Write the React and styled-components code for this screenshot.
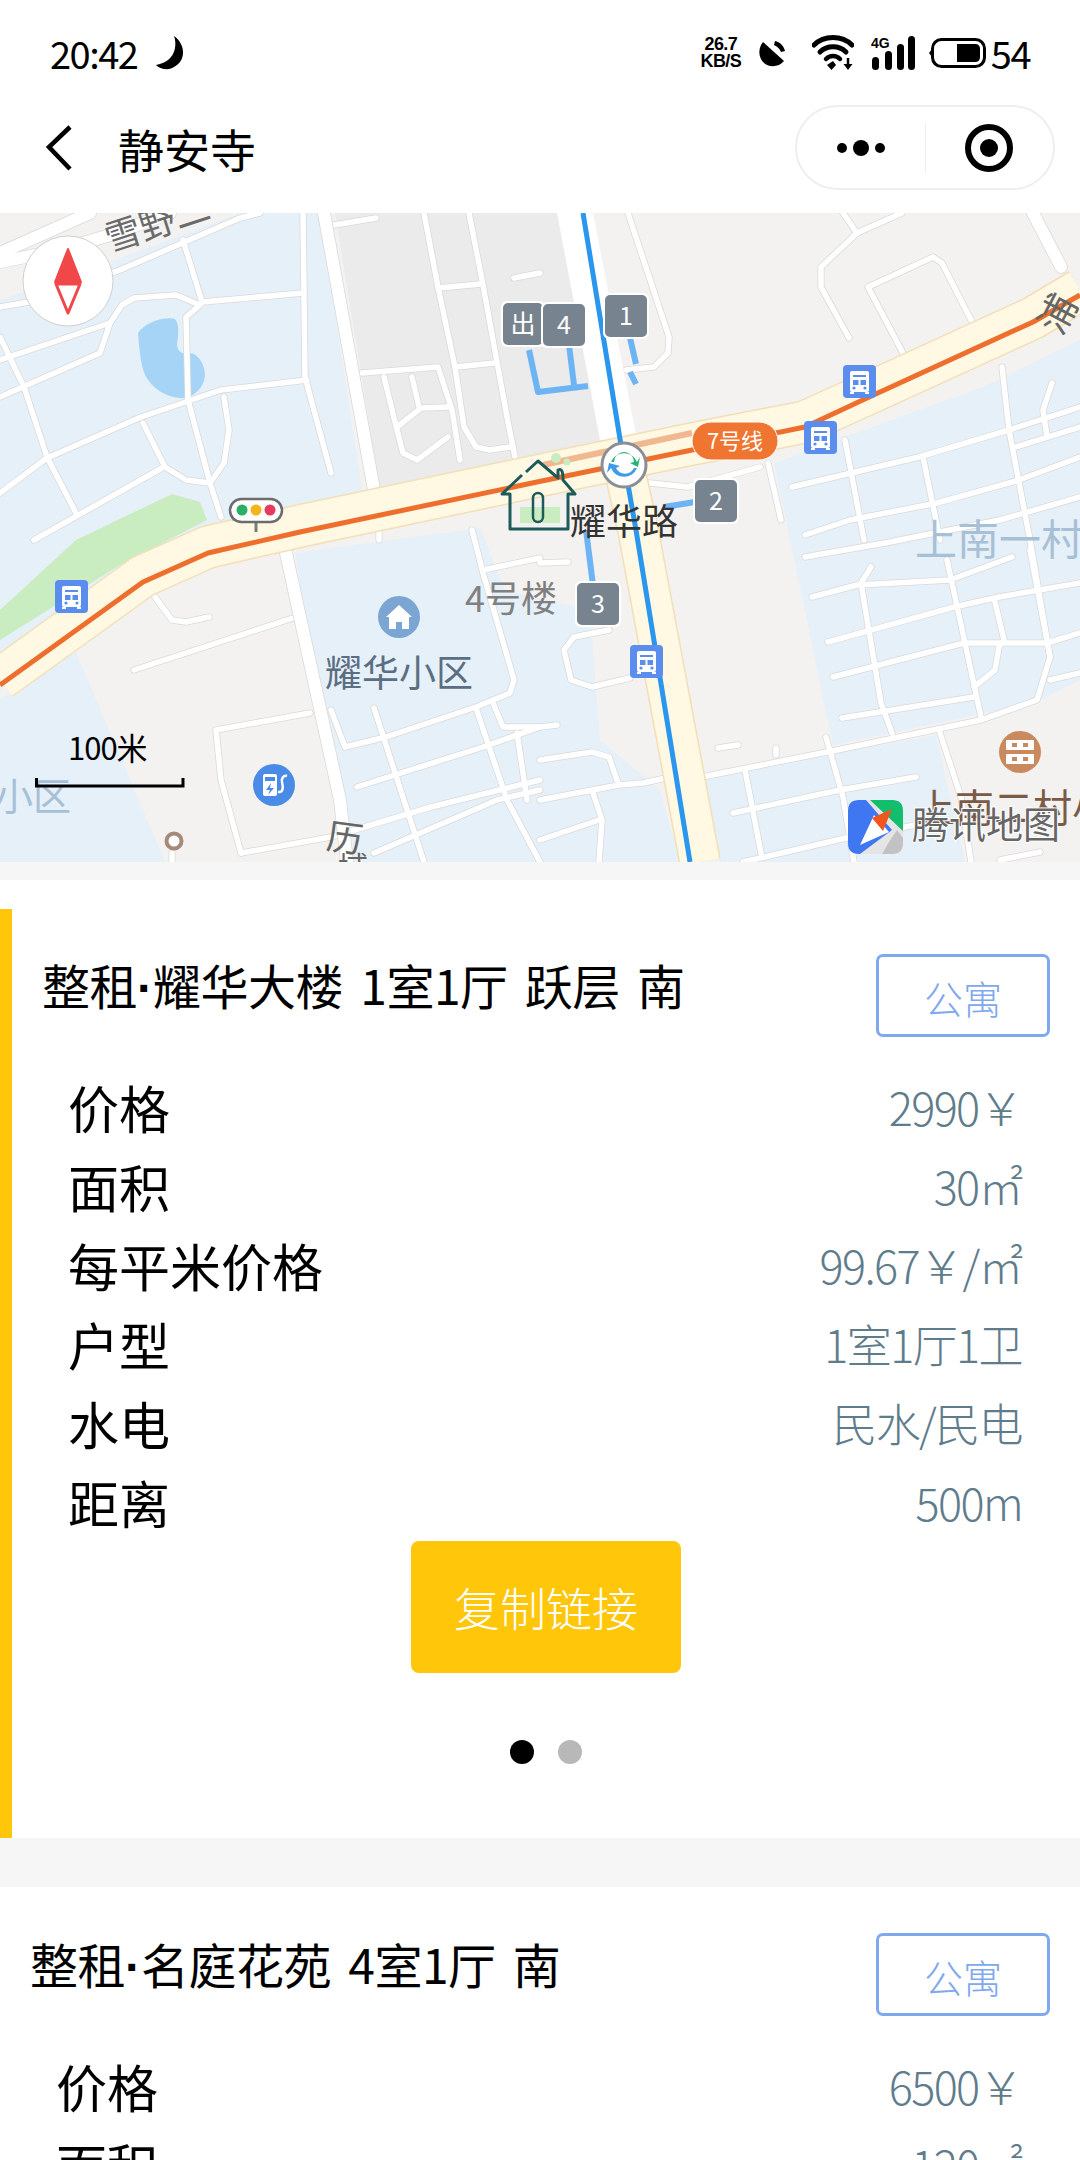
import React from "react";
import styled, { createGlobalStyle } from "styled-components";

const FONT = `"Noto Sans CJK SC", "Noto Sans", sans-serif`;

const Global = createGlobalStyle`
  html, body { margin: 0; padding: 0; background: #f6f6f6; }
  * { box-sizing: border-box; }
`;

const Page = styled.div`
  width: 1080px;
  height: 2160px;
  overflow: hidden;
  background: #f6f6f6;
  font-family: ${FONT};
  color: #000;
`;

const TopBars = styled.header`
  background: #fff;
  height: 213px;
  display: flex;
  flex-direction: column;
`;

const StatusBar = styled.div`
  height: 95px;
  padding: 33px 50px 0 50px;
  display: flex;
  align-items: flex-start;
  justify-content: space-between;
`;

const StatusGroup = styled.div`
  display: flex;
  align-items: center;
  height: 40px;
`;

const StatusText = styled.span`
  font-size: 38px;
  line-height: 40px;
  letter-spacing: -1.5px;
  font-weight: 400;
`;

const Speed = styled.div`
  width: 44px;
  margin-right: 15px;
  margin-left: -6px;
  text-align: center;
  font-family: "Liberation Sans", sans-serif;
  font-weight: 700;
  font-size: 18px;
  line-height: 17px;
  letter-spacing: -0.6px;
  white-space: nowrap;
`;

const NavBar = styled.nav`
  height: 118px;
  padding: 10px 25px 23px 45px;
  display: flex;
  align-items: center;
`;

const NavTitle = styled.h1`
  margin: 0 0 0 45px;
  font-size: 46px;
  line-height: 66px;
  height: 66px;
  font-weight: 400;
  flex: 1;
`;

const Capsule = styled.div`
  width: 260px;
  height: 85px;
  border: 2px solid #eeeeee;
  border-radius: 43px;
  display: flex;
  align-items: center;
  background: #fff;
`;

const CapsuleCell = styled.div`
  flex: 1;
  height: 50px;
  display: flex;
  align-items: center;
  justify-content: center;
  border-left: ${(p) => (p.$divided ? "1px solid #ececec" : "none")};
`;

const MapBox = styled.section`
  height: 649px;
  overflow: hidden;
  background: #f3f2f0;
`;

const MapSvg = styled.svg`
  display: block;
  width: 1080px;
  height: 649px;
  font-family: ${FONT};
`;

const Listing = styled.section`
  background: #fff;
  margin-top: ${(p) => p.$gap}px;
  padding-top: ${(p) => p.$top}px;
`;

const ListingInner = styled.div`
  border-left: ${(p) => (p.$accent ? "12px solid #ffc60a" : "none")};
  padding: ${(p) => (p.$accent ? 45 : 46)}px 30px 0 30px;
  height: ${(p) => (p.$accent ? "929px" : "auto")};
`;

const ListingHead = styled.div`
  display: flex;
  justify-content: space-between;
  align-items: flex-start;
  margin-bottom: 30px;
`;

const ListingTitle = styled.h2`
  margin: 0;
  font-size: 48px;
  line-height: 60px;
  font-weight: 400;
  letter-spacing: -0.5px;
  word-spacing: 7px;
  white-space: pre;
`;

const TitleDot = styled.span`
  font-family: "Liberation Sans", sans-serif;
  font-weight: 700;
  letter-spacing: 0;
`;

const Tag = styled.div`
  width: 174px;
  height: 83px;
  border: 3px solid #80a8ee;
  border-radius: 7px;
  color: #80a8ee;
  font-size: 39px;
  padding-top: 2px;
  display: flex;
  align-items: center;
  justify-content: center;
  font-weight: 300;
`;

const Rows = styled.div`
  padding: 0 0 0 26px;
`;

const Row = styled.div`
  height: 79px;
  padding-right: 28px;
  display: flex;
  align-items: center;
  justify-content: space-between;
`;

const RowLabel = styled.span`
  font-size: 51px;
  font-weight: 400;
`;

const RowValue = styled.span`
  font-size: 45px;
  font-weight: 300;
  color: #5f7c8c;
  letter-spacing: -1.6px;
`;

const CopyButton = styled.button`
  display: block;
  width: 270px;
  height: 132px;
  margin: 0 auto;
  padding: 0 0 3px;
  border: none;
  border-radius: 8px;
  background: #ffc60a;
  color: #fff;
  font-family: ${FONT};
  font-size: 46px;
  font-weight: 300;
`;

const Dots = styled.div`
  margin-top: 67px;
  display: flex;
  justify-content: center;
  gap: 24px;
`;

const Dot = styled.span`
  width: 24px;
  height: 24px;
  border-radius: 50%;
  background: ${(p) => (p.$on ? "#000" : "#b8b8b8")};
`;

/* ---------- status and nav icons ---------- */
const Moon = () => (
  <svg width="36" height="34" viewBox="0 0 36 34" style={{ marginLeft: 15 }}>
    <path d="M22 0c5 6 5 18-2 25-5 5-10 6-16 4 5 5 14 6 21 0 9-7 8-21-3-29z" fill="#000" />
    <path d="M22 0c3 8 1 19-6 24-4 3-8 4-12 5 6 5 15 5 21-1 8-8 6-21-3-28z" fill="#000" />
  </svg>
);

const SatIcon = () => (
  <svg width="30" height="27" viewBox="0 0 30 27" style={{ marginRight: 24 }}>
    <path d="M5 2 C0 8 0 18 6 23 C12 28 21 27 26 21 Z" fill="#000" />
    <path d="M17 1 C22 2 26 6 27 11 L23 12 C22 9 20 7 16 5 Z" fill="#000" />
  </svg>
);

const Wifi = () => (
  <svg width="42" height="36" viewBox="0 0 42 36" style={{ marginRight: 17 }}>
    <path d="M2 10 C12 0 30 0 40 10" fill="none" stroke="#000" strokeWidth="5" strokeLinecap="round" />
    <path d="M8 17 C15 10 27 10 34 17" fill="none" stroke="#000" strokeWidth="5" strokeLinecap="round" />
    <path d="M14 24 C18 20 24 20 28 24" fill="none" stroke="#000" strokeWidth="4.5" strokeLinecap="round" />
    <path d="M15 30 L21 26 L24 30 L19.500 35 Z" fill="#000" />
    <path d="M36 23 V32" stroke="#000" strokeWidth="2.500" />
    <path d="M31.500 29 H40.500 L36 35 Z" fill="#000" />
  </svg>
);

const Signal = () => (
  <svg width="46" height="34" viewBox="0 0 46 34" style={{ marginRight: 11 }} fontFamily="Liberation Sans" >
    <text x="0" y="12" fontSize="14" fontWeight="700">4G</text>
    <rect x="1" y="21" width="7" height="13" rx="3.500" fill="#000" />
    <rect x="14" y="15" width="7" height="19" rx="3.500" fill="#000" />
    <rect x="26" y="8" width="7" height="26" rx="3.500" fill="#000" />
    <rect x="37" y="0" width="7" height="34" rx="3.500" fill="#000" />
  </svg>
);

const Battery = () => (
  <svg width="58" height="30" viewBox="0 0 58 30" style={{ marginRight: 5 }}>
    <path d="M1 15 L4 11 V19 Z" fill="#000" />
    <rect x="4.500" y="1.500" width="52" height="27" rx="9" fill="none" stroke="#000" strokeWidth="3" />
    <path d="M29 6 H47 Q52 6 52 11 V19 Q52 24 47 24 H29 Z" fill="#000" />
  </svg>
);

const Back = () => (
  <svg width="28" height="46" viewBox="0 0 28 46">
    <path d="M25 2 L4 22 L25 44" fill="none" stroke="#000" strokeWidth="4.500" />
  </svg>
);

const More = () => (
  <svg width="52" height="20" viewBox="0 0 52 20">
    <circle cx="7" cy="10" r="5" fill="#000" />
    <circle cx="26" cy="10" r="8" fill="#000" />
    <circle cx="45" cy="10" r="5" fill="#000" />
  </svg>
);

const Target = () => (
  <svg width="50" height="50" viewBox="0 0 50 50">
    <circle cx="25" cy="25" r="21" fill="none" stroke="#000" strokeWidth="6" />
    <circle cx="25" cy="25" r="9" fill="#000" />
  </svg>
);

/* ---------- map data ---------- */
const thin = [
  [[183, 240], [202, 302]],
  [[202, 302], [303, 293]],
  [[303, 213], [305, 377], [331, 473]],
  [[0, 360], [110, 323], [122, 305], [134, 298], [176, 295], [200, 305], [186, 317], [188, 400], [210, 483], [221, 517]],
  [[110, 323], [100, 353], [0, 397]],
  [[0, 337], [24, 387], [47, 457], [76, 513]],
  [[0, 493], [47, 458], [141, 417], [221, 390], [307, 380]],
  [[143, 423], [165, 467], [186, 480], [210, 483], [224, 463], [229, 430], [224, 397]],
  [[162, 468], [34, 540]],
  [[362, 373], [438, 367], [452, 410], [460, 460]],
  [[384, 377], [397, 430], [403, 453], [417, 460], [448, 437]],
  [[412, 377], [419, 407]],
  [[397, 427], [421, 408], [448, 407]],
  [[424, 213], [438, 287], [455, 367], [464, 427], [476, 447], [490, 450], [510, 447]],
  [[469, 213], [483, 285], [507, 417], [515, 457]],
  [[438, 288], [481, 284]],
  [[455, 367], [495, 363]],
  [[334, 225], [376, 218]],
  [[514, 278], [540, 273]],
  [[628, 213], [669, 337], [668, 353], [654, 367], [626, 370]],
  [[843, 213], [857, 233]],
  [[902, 213], [857, 233], [821, 267], [821, 287], [849, 338]],
  [[905, 357], [868, 287], [933, 257], [942, 263], [971, 320]],
  [[1002, 367], [1009, 430], [1030, 540], [1050, 657], [1037, 700], [981, 720], [837, 750], [702, 777]],
  [[1047, 437], [1043, 410], [1052, 383]],
  [[845, 440], [864, 540]],
  [[792, 487], [919, 457], [1009, 430], [1080, 407]],
  [[1016, 447], [1080, 427]],
  [[923, 457], [940, 540]],
  [[768, 463], [781, 520]],
  [[805, 535], [850, 520], [937, 503], [1019, 480], [1080, 457]],
  [[650, 483], [688, 487], [760, 467]],
  [[805, 557], [885, 543], [1000, 520], [1080, 497]],
  [[812, 597], [857, 585], [950, 580], [1012, 557]],
  [[871, 567], [861, 583], [881, 703], [892, 733]],
  [[828, 642], [954, 607], [999, 597], [1080, 583]],
  [[833, 677], [964, 643], [1047, 643], [1080, 633]],
  [[842, 718], [974, 697]],
  [[947, 560], [981, 717]],
  [[995, 602], [1004, 640], [999, 647], [995, 670], [974, 687]],
  [[1030, 550], [1050, 657]],
  [[1050, 680], [1080, 673]],
  [[826, 737], [843, 797], [854, 862]],
  [[745, 770], [761, 853]],
  [[733, 813], [840, 790], [916, 777]],
  [[743, 862], [850, 837], [916, 825]],
  [[940, 733], [961, 797], [971, 862]],
  [[718, 748], [738, 745]],
  [[776, 755], [776, 748]],
  [[540, 563], [568, 562]],
  [[540, 727], [557, 725]],
  [[609, 630], [574, 637], [564, 650], [571, 680], [592, 687], [630, 678]],
  [[540, 760], [592, 752], [609, 757], [618, 783]],
  [[540, 800], [619, 785], [643, 783], [666, 778]],
  [[593, 793], [602, 820], [599, 862]],
  [[540, 840], [599, 820]],
  [[155, 597], [172, 620], [186, 622], [209, 617]],
  [[134, 670], [293, 618]],
  [[310, 713], [216, 730], [221, 780], [241, 853]],
  [[241, 853], [331, 837], [431, 807], [540, 780]],
  [[331, 710], [345, 747], [386, 737], [476, 707], [510, 693], [514, 680], [483, 573], [472, 530]],
  [[374, 708], [424, 862]],
  [[357, 787], [483, 747], [540, 727]],
  [[476, 708], [507, 800], [540, 862]],
  [[493, 703], [503, 727], [540, 727]],
  [[517, 733], [527, 800]],
  [[374, 853], [497, 800], [540, 790]],
  [[483, 570], [540, 558]],
  [[379, 533], [379, 540]],
  [[172, 853], [172, 862]],
  [[1000, 860], [1040, 852]],
  [[0, 307], [40, 300], [120, 270], [240, 218], [260, 213]],
];

const thick = [
  [[0, 262], [60, 250], [110, 235], [170, 213]],
  [[324, 213], [374, 490]],
  [[286, 553], [340, 800], [347, 862]],
  [[1033, 213], [1061, 267]],
  [[0, 253], [90, 213]],
];

const mainRoad = [[0, 679], [143, 576], [208, 547], [300, 526], [537, 476], [692, 444], [805, 422], [867, 394], [1033, 318], [1080, 290]];
const orange = [[0, 685], [143, 582], [208, 553], [300, 532], [537, 482], [692, 450], [805, 427], [867, 398], [1033, 322], [1080, 295]];
const pts = (a) => a.map((p) => p.join(",")).join(" ");

const Line = styled.polyline`
  fill: none;
  stroke: ${(p) => p.$color};
  stroke-width: ${(p) => p.$w}px;
  stroke-linecap: ${(p) => p.$cap || "round"};
  stroke-linejoin: round;
`;

const Roads = ({ list, w }) => (
  <>
    {list.map((r, i) => <Line key={`o${i}`} points={pts(r)} $color="#d9d9d9" $w={w + 1.5} />)}
    {list.map((r, i) => <Line key={`i${i}`} points={pts(r)} $color="#ffffff" $w={w} />)}
  </>
);

const Bus = ({ x, y }) => (
  <g transform={`translate(${x} ${y})`}>
    <rect width="33" height="33" rx="4" fill="#5b8def" />
    <rect x="7" y="6" width="19" height="21" rx="2" fill="#fff" />
    <rect x="10" y="10" width="13" height="2" fill="#5b8def" />
    <rect x="10" y="15" width="13" height="5" fill="#5b8def" />
    <rect x="15.500" y="15" width="2" height="5" fill="#fff" />
    <circle cx="11" cy="23" r="1.600" fill="#5b8def" />
    <circle cx="22" cy="23" r="1.600" fill="#5b8def" />
    <rect x="7" y="27" width="4" height="2" fill="#fff" />
    <rect x="22" y="27" width="4" height="2" fill="#fff" />
  </g>
);

const Exit = ({ x, y, w = 42, label }) => (
  <g>
    <rect x={x - 2} y={y - 2} width={w + 4} height="46" rx="6" fill="#fff" />
    <rect x={x} y={y} width={w} height="42" rx="5" fill="#77838f" />
    <text x={x + w / 2} y={y + 30} fontSize="25" fill="#fff" textAnchor="middle">{label}</text>
  </g>
);

const MapText = styled.text`
  font-size: ${(p) => p.$size}px;
  fill: ${(p) => p.$color};
  text-anchor: ${(p) => p.$anchor || "start"};
`;

const MapDrawing = () => (
  <MapSvg viewBox="0 213 1080 649">
    <rect x="0" y="213" width="1080" height="649" fill="#f3f2f0" />
    {/* areas */}
    <polygon points="0,300 110,262 240,213 320,213 362,490 210,530 0,690" fill="#e6f0f9" />
    <polygon points="335,213 592,213 622,440 380,490" fill="#ebebeb" />
    <polygon points="295,553 480,528 505,590 590,610 600,740 660,790 680,862 345,862" fill="#e6f0f9" />
    <polygon points="0,700 75,650 165,862 0,862" fill="#e6f0f9" />
    <polygon points="774,463 985,386 1080,340 1080,680 1037,702 833,745" fill="#e6f0f9" />
    <polygon points="702,777 936,735 965,862 720,862" fill="#e6f0f9" />
    <polygon points="0,640 0,610 76,540 172,494 200,502 207,520 120,565" fill="#c9edc0" />
    <path d="M138 333 C145 322 165 316 175 319 C180 325 178 335 177 345 C178 352 182 354 188 353 C198 352 205 365 205 375 C204 388 194 398 180 398 C165 397 152 388 145 375 C140 362 139 345 138 333Z" fill="#a6d4f7" />
    <Roads list={thin} w={5.5} />
    <Roads list={thick} w={12} />
    <polygon points="557,213 593,213 637,440 600,440" fill="#fff" />
    {/* main roads */}
    <Line points="618,440 638,530 700,862" $color="#f2dfb8" $w={42} $cap="butt" />
    <Line points="618,440 638,530 700,862" $color="#fff8e2" $w={39} $cap="butt" />
    <Line points={pts(mainRoad)} $color="#f2dfb8" $w={44} $cap="butt" />
    <Line points={pts(mainRoad)} $color="#fff8e2" $w={41} $cap="butt" />
    <Line points="543,465 692,433" $color="#f0b890" $w={6} $cap="butt" />
    <Line points={pts(orange)} $color="#ee6f2d" $w={5} $cap="butt" />
    <Line points="583,213 621,445 636,530 690,862" $color="#2a96ee" $w={5} $cap="butt" />
    {/* metro exit paths */}
    <Line points="529,350 538,392 588,386" $color="#6cb4f4" $w={6} $cap="butt" />
    <Line points="569,345 574,385" $color="#6cb4f4" $w={6} $cap="butt" />
    <Line points="630,338 636,364" $color="#6cb4f4" $w={6} $cap="butt" />
    <Line points="630,372 636,384" $color="#6cb4f4" $w={6} $cap="butt" />
    <Line points="664,507 695,502" $color="#6cb4f4" $w={6} $cap="butt" />
    <Line points="586,530 593,585" $color="#6cb4f4" $w={6} $cap="butt" />
    {/* pois */}
    <circle cx="399" cy="617" r="21" fill="#7ba6d4" />
    <path d="M386 617 L399 605 L412 617 L409 617 V629 H402 V622 H396 V629 H389 V617Z" fill="#fff" />
    <circle cx="274" cy="785" r="21" fill="#4a8be8" />
    <rect x="263" y="774" width="14" height="22" rx="2" fill="#fff" />
    <rect x="265" y="777" width="10" height="4" fill="#4a8be8" />
    <path d="M271 783 L266 790 H270 L268 795 L274 788 H270Z" fill="#4a8be8" />
    <path d="M278 792 C284 793 283 786 282 782 C281 778 284 775 287 776" fill="none" stroke="#fff" strokeWidth="2.500" />
    <circle cx="1020" cy="752" r="21" fill="#c98a5f" />
    <rect x="1006" y="740" width="28" height="10" rx="1" fill="#fff" />
    <rect x="1006" y="754" width="28" height="10" rx="1" fill="#fff" />
    <rect x="1012" y="743" width="5" height="4" fill="#c98a5f" />
    <rect x="1023" y="757" width="5" height="4" fill="#c98a5f" />
    <rect x="1012" y="757" width="5" height="4" fill="#c98a5f" />
    <rect x="1023" y="743" width="5" height="4" fill="#c98a5f" />
    <circle cx="174" cy="841" r="7.500" fill="#fff" stroke="#a58a78" strokeWidth="4" />
    {/* labels */}
    <MapText x="110" y="252" $size="36" $color="#6b6b6b" transform="rotate(-18 110 252)">雪野二</MapText>
    <MapText x="915" y="555" $size="42" $color="#a8c0d6">上南一村</MapText>
    <MapText x="-5" y="810" $size="38" $color="#a8c0d6">小区</MapText>
    <MapText x="465" y="612" $size="36" $color="#808080">4号楼</MapText>
    <MapText x="325" y="687" $size="37" $color="#5c6e82">耀华小区</MapText>
    <MapText x="327" y="851" $size="36" $color="#666" transform="rotate(8 344 838)">历</MapText>
    <MapText x="338" y="878" $size="30" $color="#666">域</MapText>
    <MapText x="1040" y="328" $size="38" $color="#666" transform="rotate(-62 1058 315)">浦</MapText>
    <MapText x="916" y="822" $size="39" $color="#7b5a48">上南二村小</MapText>
    {/* traffic light */}
    <rect x="232" y="517" width="38" height="4" fill="#c4c4c4" />
    <path d="M256 520 V532" stroke="#7a7a7a" strokeWidth="3" />
    <rect x="230" y="499" width="52" height="23" rx="11.500" fill="#fff" stroke="#6c6c6c" strokeWidth="2.500" />
    <circle cx="242" cy="510" r="5.500" fill="#2bae66" />
    <circle cx="256" cy="510" r="5.500" fill="#f2b61c" />
    <circle cx="270" cy="510" r="5.500" fill="#e83a5f" />
    {/* buses */}
    <Bus x={843} y={365} />
    <Bus x={804} y={421} />
    <Bus x={55} y={580} />
    <Bus x={630} y={645} />
    {/* exits */}
    <Exit x={503} y={303} w={40} label="出" />
    <Exit x={543} y={304} label="4" />
    <Exit x={605} y={295} label="1" />
    <Exit x={695} y={480} label="2" />
    <Exit x={577} y={583} label="3" />
    {/* house */}
    <rect x="520" y="507" width="40" height="16" fill="#c9edc0" />
    <circle cx="556" cy="458" r="5" fill="#c9edc0" />
    <circle cx="567" cy="462" r="3.500" fill="#c9edc0" />
    <path d="M526 472 L538 461 L558 478 L558 470 C562 468 563 472 563 480 L575 494 H568 V529 H510 V494 H502 L522 475" fill="none" stroke="#1d5a5a" strokeWidth="3" strokeLinejoin="round" />
    <rect x="533" y="493" width="10" height="29" rx="5" fill="none" stroke="#1d5a5a" strokeWidth="2.500" />
    {/* station */}
    <circle cx="624" cy="465" r="22" fill="#fff" stroke="#8a8f96" strokeWidth="3" />
    <path d="M611 462 A14 14 0 0 1 637 462 L640 457 L638 467 L630 463 L634 462 A10 10 0 0 0 614 462Z" fill="#22b573" />
    <path d="M611 468 A14 14 0 0 0 637 468 L634 468 A10 10 0 0 1 616 468 L620 466 L609 463 L607 473Z" fill="#3f9bea" />
    <MapText x="570" y="535" $size="36" $color="#333">耀华路</MapText>
    {/* line badge */}
    <rect x="692" y="422" width="86" height="38" rx="19" fill="#ef7530" stroke="#fff" strokeWidth="1" />
    <MapText x="735" y="449" $size="22" $color="#fff" $anchor="middle">7号线</MapText>
    {/* compass */}
    <circle cx="68" cy="281" r="45" fill="#fff" stroke="#cfcfcf" strokeWidth="1" />
    <path d="M68 249 L81 282 H55Z" fill="#f04848" stroke="#f04848" strokeWidth="2" strokeLinejoin="round" />
    <path d="M56 284 H80 L68 313Z" fill="#fff" stroke="#f04848" strokeWidth="3" strokeLinejoin="round" />
    {/* scale */}
    <MapText x="68" y="760" $size="31" $color="#000" style={{ letterSpacing: -1 }}>100米</MapText>
    <path d="M36.500 778 V786 H183 V778" fill="none" stroke="#000" strokeWidth="3" />
    {/* logo */}
    <rect x="848" y="800" width="55" height="54" rx="11" fill="#e5e5e5" />
    <path d="M870 800 H892 Q903 800 903 811 V831 Z" fill="#12bd6e" />
    <path d="M859 800 H866 L892 830 L860 854 H859 Q848 854 848 843 V811 Q848 800 859 800Z" fill="#3f77f2" />
    <path d="M889 842 L897 830 L903 838 V843 Q903 854 892 854 H882Z" fill="#c2c2c2" />
    <path d="M860 845 L874 815 L889 832Z" fill="#fff" />
    <path d="M872 818 L892 809 L883 831Z" fill="#f2561d" />
    <MapText x="912" y="839" $size="37" $color="#666" style={{ paintOrder: "stroke", stroke: "#ffffff", strokeWidth: 2 }}>腾讯地图</MapText>
  </MapSvg>
);

const rows1 = [
  ["价格", "2990￥"],
  ["面积", "30㎡"],
  ["每平米价格", "99.67￥/㎡"],
  ["户型", "1室1厅1卫"],
  ["水电", "民水/民电"],
  ["距离", "500m"],
];
const rows2 = [
  ["价格", "6500￥"],
  ["面积", "120㎡"],
];

const App = () => (
  <Page>
    <Global />
    <TopBars>
      <StatusBar>
        <StatusGroup>
          <StatusText>20:42</StatusText>
          <Moon />
        </StatusGroup>
        <StatusGroup>
          <Speed>26.7<br />KB/S</Speed>
          <SatIcon />
          <Wifi />
          <Signal />
          <Battery />
          <StatusText>54</StatusText>
        </StatusGroup>
      </StatusBar>
      <NavBar>
        <Back />
        <NavTitle>静安寺</NavTitle>
        <Capsule>
          <CapsuleCell><More /></CapsuleCell>
          <CapsuleCell $divided><Target /></CapsuleCell>
        </Capsule>
      </NavBar>
    </TopBars>
    <MapBox><MapDrawing /></MapBox>
    <Listing $gap={18} $top={29}>
      <ListingInner $accent>
        <ListingHead>
          <ListingTitle>整租<TitleDot>·</TitleDot>{"耀华大楼 1室1厅 跃层 南"}</ListingTitle>
          <Tag>公寓</Tag>
        </ListingHead>
        <Rows>
          {rows1.map(([k, v]) => (
            <Row key={k}><RowLabel>{k}</RowLabel><RowValue>{v}</RowValue></Row>
          ))}
        </Rows>
        <CopyButton>复制链接</CopyButton>
        <Dots><Dot $on /><Dot /></Dots>
      </ListingInner>
    </Listing>
    <Listing $gap={49} $top={0}>
      <ListingInner>
        <ListingHead>
          <ListingTitle>整租<TitleDot>·</TitleDot>{"名庭花苑 4室1厅 南"}</ListingTitle>
          <Tag>公寓</Tag>
        </ListingHead>
        <Rows>
          {rows2.map(([k, v]) => (
            <Row key={k}><RowLabel>{k}</RowLabel><RowValue>{v}</RowValue></Row>
          ))}
        </Rows>
      </ListingInner>
    </Listing>
  </Page>
);

export default App;
